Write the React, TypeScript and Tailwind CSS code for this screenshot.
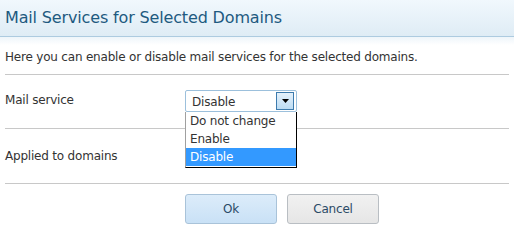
import { useState } from 'react'

const options = ['Do not change', 'Enable', 'Disable']

export default function App() {
  const [value, setValue] = useState('Disable')

  return (
    <div className="w-[514px] h-[240px] bg-white text-[12px] tracking-[-0.2px] text-[#333] font-['DejaVu_Sans',sans-serif] overflow-hidden">
      {/* Header */}
      <div className="h-[37px] px-[5px] flex items-center bg-gradient-to-b from-[#f1f8fd] to-[#dfecf5] border-b border-[#adcbe0]">
        <h1 className="text-[16px] tracking-[-0.15px] text-[#1e5a80] leading-none">Mail Services for Selected Domains</h1>
      </div>
      <div className="h-[8px] bg-gradient-to-b from-[#eef5fa] to-white" />

      <div className="px-[5px]">
        <p className="h-[22px] leading-[22px] mt-[1px]">Here you can enable or disable mail services for the selected domains.</p>
        <div className="border-t border-[#c8c8c8] mt-[6px]" />

        {/* Mail service row */}
        <div className="h-[53px] flex pt-[15px]">
          <div className="w-[180px] pt-[1px]">Mail service</div>
          <div className="relative">
            <div className="w-[112px] h-[22px] border border-[#9cc0dc] rounded-[2px] flex items-center justify-between pl-[6px] pr-[2px] bg-white">
              <span className="pt-[1px]">{value}</span>
              <span className="w-[18px] h-[18px] border border-[#3d7bad] bg-gradient-to-b from-[#e4f1fb] to-[#bcdcf3] flex items-center justify-center">
                <svg width="7" height="4" viewBox="0 0 7 4"><path d="M0 0h7L3.5 4z" fill="#000" /></svg>
              </span>
            </div>
            <div className="absolute top-[22px] left-0 w-[112px] bg-white border-l border-l-[#a0a0a0] border-r border-r-black border-b border-b-black z-10">
              {options.map((o) => (
                <div
                  key={o}
                  onClick={() => setValue(o)}
                  className={`h-[18px] leading-[18px] pl-[4px] ${o === value ? 'bg-[#3399ff] text-white' : 'text-[#333]'}`}
                >
                  {o}
                </div>
              ))}
              <div className="h-[1px]" />
            </div>
          </div>
        </div>
        <div className="border-t border-[#c8c8c8]" />

        {/* Applied to domains */}
        <div className="h-[54px] pt-[18px]">Applied to domains</div>
        <div className="border-t border-[#c8c8c8]" />

        {/* Buttons */}
        <div className="flex gap-[10px] pl-[180px] pt-[10px]">
          <button className="w-[92px] h-[30px] rounded-[3px] border border-[#a9c3d9] bg-gradient-to-b from-[#dcecfa] to-[#c9e1f6] text-[#2b4a66]">Ok</button>
          <button className="w-[92px] h-[30px] rounded-[3px] border border-[#b9bec3] bg-gradient-to-b from-[#f1f1f1] to-[#e6e6e6] text-[#2b4a66]">Cancel</button>
        </div>
      </div>
    </div>
  )
}
